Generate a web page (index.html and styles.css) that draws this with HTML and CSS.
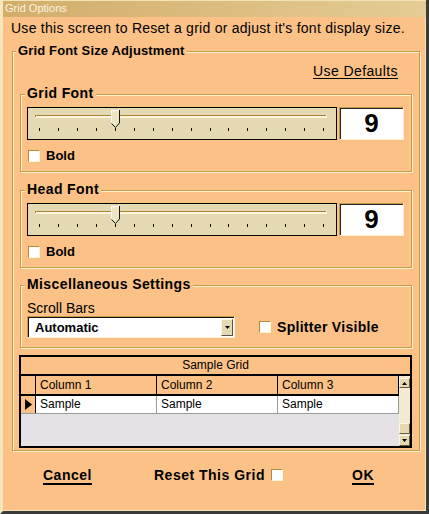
FILE: index.html
```html
<!DOCTYPE html>
<html lang="en">
<head>
    <meta charset="UTF-8">
    <title>Grid Options</title>
    <link rel="stylesheet" href="styles.css">
</head>
<body>
<div class="window">
    <div class="titlebar">Grid Options</div>
    <div class="intro">Use this screen to Reset a grid or adjust it's font display size.</div>

    <div class="group outer">
        <span class="legend">Grid Font Size Adjustment</span>
        <div class="defaults-row"><span class="link">Use Defaults</span></div>

        <!-- Grid Font -->
        <div class="group sub font-group">
            <span class="legend sub-legend">Grid Font</span>
            <div class="slider-row">
                <div class="slider">
                    <svg width="308" height="31" viewBox="0 0 308 31">
                        <rect x="7" y="7" width="292" height="3" fill="#fff4dc"/>
                        <rect x="7" y="7" width="291" height="1" fill="#a88636"/>
                        <rect x="7" y="7" width="1" height="2" fill="#a88636"/>
                        <path d="M83.5 2.5 H91.5 V15 L87.5 19 L83.5 15 Z" fill="#efe4c4"/>
                        <polyline points="83.5,15 83.5,2.5 91,2.5" fill="none" stroke="#fff" stroke-width="1"/>
                        <polyline points="91.5,2 91.5,15 87.5,19.5 83.5,15.5" fill="none" stroke="#1a1a1a" stroke-width="1"/>
                        <g fill="#000">
                            <rect x="11" y="20" width="1" height="3"/><rect x="30" y="20" width="1" height="3"/>
                            <rect x="49" y="20" width="1" height="3"/><rect x="68" y="20" width="1" height="3"/>
                            <rect x="87" y="20" width="1" height="3"/><rect x="106" y="20" width="1" height="3"/>
                            <rect x="125" y="20" width="1" height="3"/><rect x="144" y="20" width="1" height="3"/>
                            <rect x="163" y="20" width="1" height="3"/><rect x="182" y="20" width="1" height="3"/>
                            <rect x="200" y="20" width="1" height="3"/><rect x="219" y="20" width="1" height="3"/>
                            <rect x="238" y="20" width="1" height="3"/><rect x="257" y="20" width="1" height="3"/>
                            <rect x="276" y="20" width="1" height="3"/><rect x="295" y="20" width="1" height="3"/>
                        </g>
                    </svg>
                </div>
                <div class="num">9</div>
            </div>
            <div class="check-row"><span class="cb"></span><span>Bold</span></div>
        </div>

        <!-- Head Font -->
        <div class="group sub font-group head">
            <span class="legend sub-legend">Head Font</span>
            <div class="slider-row">
                <div class="slider">
                    <svg width="308" height="31" viewBox="0 0 308 31">
                        <rect x="7" y="7" width="292" height="3" fill="#fff4dc"/>
                        <rect x="7" y="7" width="291" height="1" fill="#a88636"/>
                        <rect x="7" y="7" width="1" height="2" fill="#a88636"/>
                        <path d="M83.5 2.5 H91.5 V15 L87.5 19 L83.5 15 Z" fill="#efe4c4"/>
                        <polyline points="83.5,15 83.5,2.5 91,2.5" fill="none" stroke="#fff" stroke-width="1"/>
                        <polyline points="91.5,2 91.5,15 87.5,19.5 83.5,15.5" fill="none" stroke="#1a1a1a" stroke-width="1"/>
                        <g fill="#000">
                            <rect x="11" y="20" width="1" height="3"/><rect x="30" y="20" width="1" height="3"/>
                            <rect x="49" y="20" width="1" height="3"/><rect x="68" y="20" width="1" height="3"/>
                            <rect x="87" y="20" width="1" height="3"/><rect x="106" y="20" width="1" height="3"/>
                            <rect x="125" y="20" width="1" height="3"/><rect x="144" y="20" width="1" height="3"/>
                            <rect x="163" y="20" width="1" height="3"/><rect x="182" y="20" width="1" height="3"/>
                            <rect x="200" y="20" width="1" height="3"/><rect x="219" y="20" width="1" height="3"/>
                            <rect x="238" y="20" width="1" height="3"/><rect x="257" y="20" width="1" height="3"/>
                            <rect x="276" y="20" width="1" height="3"/><rect x="295" y="20" width="1" height="3"/>
                        </g>
                    </svg>
                </div>
                <div class="num">9</div>
            </div>
            <div class="check-row"><span class="cb"></span><span>Bold</span></div>
        </div>

        <!-- Miscellaneous -->
        <div class="group sub misc">
            <span class="legend sub-legend">Miscellaneous Settings</span>
            <div class="field-label">Scroll Bars</div>
            <div class="combo-row">
                <div class="combo">
                    <span class="combo-text">Automatic</span>
                    <span class="combo-btn">
                        <svg width="5" height="3" viewBox="0 0 5 3"><path d="M0 0 H5 L2.5 3 Z" fill="#000"/></svg>
                    </span>
                </div>
                <div class="check-row splitter"><span class="cb"></span><span>Splitter Visible</span></div>
            </div>
        </div>

        <!-- Sample grid -->
        <div class="grid">
            <div class="grid-title">Sample Grid</div>
            <div class="grid-body">
                <div class="grid-main">
                    <div class="grid-row head-row">
                        <div class="cell ind"></div>
                        <div class="cell col">Column 1</div>
                        <div class="cell col">Column 2</div>
                        <div class="cell col">Column 3</div>
                    </div>
                    <div class="grid-row data-row">
                        <div class="cell ind">
                            <svg width="7" height="11" viewBox="0 0 7 11"><path d="M0 0 L7 5.5 L0 11 Z" fill="#000"/></svg>
                        </div>
                        <div class="cell col">Sample</div>
                        <div class="cell col">Sample</div>
                        <div class="cell col">Sample</div>
                    </div>
                </div>
                <div class="grid-scroll">
                    <span class="sb-btn up">
                        <svg width="5" height="3" viewBox="0 0 5 3"><path d="M0 3 H5 L2.5 0 Z" fill="#000"/></svg>
                    </span>
                    <span class="sb-track"></span>
                    <span class="sb-thumb"></span>
                    <span class="sb-btn down">
                        <svg width="5" height="3" viewBox="0 0 5 3"><path d="M0 0 H5 L2.5 3 Z" fill="#000"/></svg>
                    </span>
                </div>
            </div>
        </div>
    </div>

    <div class="actions">
        <span class="action cancel"><span class="ul">Cancel</span></span>
        <span class="action reset">Reset This Grid <span class="cb"></span></span>
        <span class="action ok"><span class="ul">OK</span></span>
    </div>
</div>
</body>
</html>
```

FILE: styles.css
```css
body {
    margin: 0;
    font-family: "Liberation Sans", Arial, sans-serif;
    color: #000;
    background: #fbc186;
}

.window {
    width: 429px;
    height: 514px;
    box-sizing: border-box;
    background: #fbc186;
    border-left: 3px solid #f6e6bc;
    border-right: 3px solid #3a3a3a;
    border-bottom: 3px solid #3a3a3a;
    box-shadow: inset -1px -1px 0 #f6e6bc;
}

.titlebar {
    height: 17px;
    box-sizing: border-box;
    border-top: 1px solid #f3e2b4;
    background: linear-gradient(to right, #d3ad6a, #e4cc94);
    color: #fbf3e3;
    font-size: 11px;
    line-height: 15px;
    padding-left: 2px;
}

.intro {
    margin: 2px 0 0 8px;
    font-size: 14px;
    line-height: 18px;
    letter-spacing: 0.26px;
}

/* groupbox: gold line with a light line beside it */
.group {
    border: 1px solid #c59d48;
    box-shadow: inset 1px 1px 0 #fff0d0, 1px 1px 0 #fff0d0;
    box-sizing: border-box;
}

.legend {
    display: block;
    width: fit-content;
    margin: -9px 0 0 3px;
    padding: 0 2px;
    background: #fbc186;
    font-weight: bold;
    font-size: 13px;
    line-height: 16px;
    letter-spacing: 0.15px;
}

.outer {
    margin: 14px 0 0 9px;
    width: 408px;
    height: 400px;
}

.defaults-row {
    display: flex;
    justify-content: flex-end;
    margin-top: 4px;
    padding-right: 21px;
    font-size: 14px;
    line-height: 16px;
    letter-spacing: 0.4px;
}

.link {
    text-decoration: underline;
    text-underline-offset: 2px;
}

.sub {
    margin: 0 7px;
}

.sub-legend {
    margin: -10px 0 0 4px;
    font-size: 14px;
    letter-spacing: 0.4px;
}

.font-group {
    height: 78px;
    margin-top: 15px;
}

.font-group.head {
    margin-top: 18px;
}

.slider-row {
    display: flex;
    gap: 2px;
    margin: 6px 0 0 6px;
    height: 33px;
}

.slider {
    width: 310px;
    height: 33px;
    box-sizing: border-box;
    border: 1px solid #000;
    background: #e4d9b2;
}

.slider svg {
    display: block;
}

.num {
    width: 65px;
    height: 33px;
    box-sizing: border-box;
    background: #fff;
    border: 1px solid;
    border-color: #c59d48 #fff0d0 #fff0d0 #c59d48;
    box-shadow: inset 1px 1px 0 #222;
    display: flex;
    align-items: center;
    justify-content: center;
    font-size: 26px;
    font-weight: bold;
}

.check-row {
    display: flex;
    align-items: center;
    gap: 6px;
    height: 13px;
    margin: 9px 0 0 7px;
    font-weight: bold;
    font-size: 13px;
}

.cb {
    display: inline-block;
    width: 12px;
    height: 12px;
    box-sizing: border-box;
    background: #fff;
    border: 1px solid;
    border-color: #b08a3c #fff3da #fff3da #b08a3c;
}

.misc {
    height: 63px;
    margin-top: 17px;
}

.field-label {
    margin: 8px 0 0 6px;
    font-size: 14px;
    line-height: 16px;
}

.combo-row {
    display: flex;
    align-items: center;
    margin-left: 6px;
    height: 22px;
}

.combo {
    width: 208px;
    height: 22px;
    box-sizing: border-box;
    background: #fff;
    border: 1px solid;
    border-color: #c59d48 #fff0d0 #fff0d0 #c59d48;
    box-shadow: inset 1px 1px 0 #111;
    display: flex;
    align-items: center;
    justify-content: space-between;
    padding: 1px 1px 0 2px;
}

.combo-text {
    padding-left: 5px;
    font-weight: bold;
    font-size: 13px;
}

.combo-btn {
    width: 12px;
    height: 17px;
    box-sizing: border-box;
    background: #e4d9b2;
    border: 1px solid;
    border-color: #fff6e0 #555 #555 #fff6e0;
    display: flex;
    align-items: center;
    justify-content: center;
}

.combo-btn svg,
.sb-btn svg {
    display: block;
}

.splitter {
    margin: 0 0 0 24px;
    font-size: 14px;
    height: 14px;
    letter-spacing: 0.3px;
}

/* sample grid */
.grid {
    margin: 7px 0 0 6px;
    width: 393px;
    height: 93px;
    box-sizing: border-box;
    border: 2px solid #000;
    background: #e4e2e4;
}

.grid-title {
    height: 19px;
    box-sizing: border-box;
    border-bottom: 2px solid #000;
    background: #fbc186;
    text-align: center;
    font-size: 12px;
    line-height: 17px;
}

.grid-body {
    display: flex;
    height: 70px;
}

.grid-main {
    width: 378px;
}

.grid-row {
    display: flex;
    font-size: 12px;
}

.head-row {
    height: 20px;
    box-sizing: border-box;
    border-bottom: 2px solid #000;
    background: #fbc186;
    line-height: 18px;
}

.data-row {
    height: 18px;
    box-sizing: border-box;
    border-bottom: 1px solid #9a9a9a;
    background: #fff;
    line-height: 17px;
}

.cell {
    box-sizing: border-box;
    border-right: 1px solid #000;
}

.cell.ind {
    width: 15px;
    background: #fbc186;
}

.data-row .cell.ind {
    display: flex;
    align-items: center;
    padding-left: 4px;
}

.cell.col {
    width: 121px;
    padding-left: 4px;
}

.data-row .cell.col {
    border-right-color: #9a9a9a;
}

.grid-scroll {
    width: 11px;
    background: #f3ead2;
    display: flex;
    flex-direction: column;
}

.sb-btn,
.sb-thumb {
    box-sizing: border-box;
    background: #e4d9b2;
    border: 1px solid;
    border-color: #fff6e0 #6a5a3a #6a5a3a #fff6e0;
    display: flex;
    align-items: center;
    justify-content: center;
}

.sb-btn.up {
    margin-top: 2px;
    height: 10px;
}

.sb-track {
    flex: 1;
}

.sb-thumb {
    height: 11px;
}

.sb-btn.down {
    margin-top: 1px;
    height: 11px;
}

/* bottom actions */
.actions {
    display: flex;
    align-items: center;
    margin-top: 16px;
    height: 16px;
    font-weight: bold;
    font-size: 14px;
    letter-spacing: 0.5px;
}

.action {
    display: flex;
    align-items: center;
}

.cancel {
    margin-left: 40px;
    width: 111px;
}

.reset {
    width: 198px;
    gap: 6px;
}

.ul {
    text-decoration: underline;
    text-decoration-thickness: 2px;
    text-underline-offset: 3px;
}
```
